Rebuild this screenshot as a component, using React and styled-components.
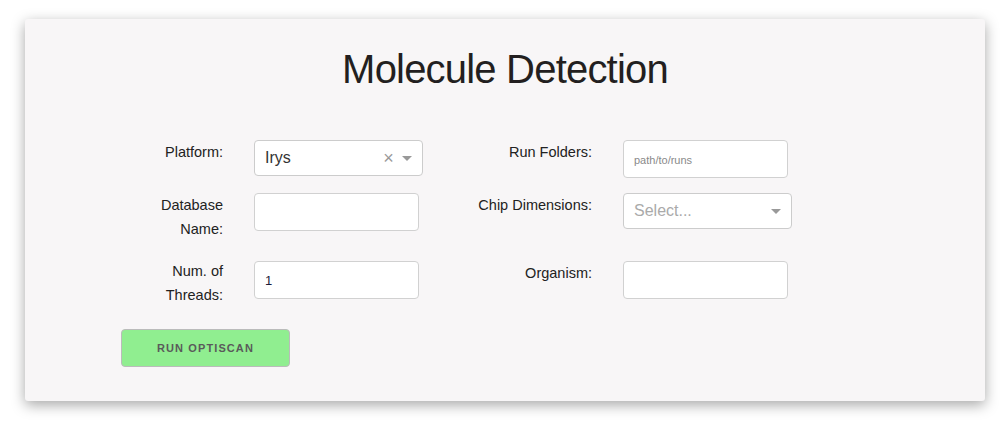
import React from "react";
import styled, { createGlobalStyle } from "styled-components";

const Global = createGlobalStyle`
  html, body { margin: 0; padding: 0; background: #ffffff; }
  body { font-family: "Liberation Sans", Arial, Helvetica, sans-serif; color: #222; }
  * { box-sizing: border-box; }
`;

const Page = styled.div`
  padding: 19px 20px 23px 25px;
  width: 1005px;
`;

const Card = styled.div`
  width: 960px;
  height: 382px;
  background: #f8f6f7;
  border-radius: 3px;
  box-shadow: 0 4px 14px rgba(0, 0, 0, 0.35);
  padding: 26px 0 0 96px;
`;

const Title = styled.h1`
  margin: 0 0 47px -96px;
  width: 960px;
  text-align: center;
  font-size: 40px;
  line-height: 48px;
  font-weight: 400;
  letter-spacing: -0.8px;
  color: #231f20;
`;

const Row = styled.div`
  display: grid;
  grid-template-columns: 102px 169px 138px 169px;
  column-gap: 31px;
  align-items: start;
  margin-bottom: ${(p) => p.$gap}px;
`;

const Label = styled.label`
  display: block;
  text-align: right;
  font-size: 14.5px;
  line-height: 24px;
  color: #222;
  margin-top: ${(p) => p.$offset || 0}px;
`;

const TextInput = styled.input`
  width: 165px;
  height: 38px;
  border: 1px solid #d1d1d1;
  border-radius: 4px;
  background: #fff;
  padding: 6px 10px;
  font-family: "Liberation Sans", Arial, sans-serif;
  font-size: 13px;
  color: #1c1c3a;
  outline: none;
  &::placeholder {
    color: #8a8a8a;
    font-size: 11px;
  }
`;

const SelectBox = styled.div`
  width: 169px;
  height: 36px;
  border: 1px solid #ccc;
  border-radius: 4px;
  background: #fff;
  display: flex;
  align-items: center;
  padding-left: 10px;
  font-size: 16px;
`;

const SelectValue = styled.span`
  flex: 1;
  color: ${(p) => (p.$placeholder ? "#aaa" : "#333")};
`;

const Clear = styled.span`
  width: 17px;
  font-size: 18px;
  line-height: 1;
  color: #999;
  text-align: center;
`;

const ArrowZone = styled.span`
  width: 25px;
  padding-right: 5px;
  display: flex;
  justify-content: center;
`;

const Arrow = styled.span`
  width: 0;
  height: 0;
  border-style: solid;
  border-width: 5px 5px 2.5px;
  border-color: #999 transparent transparent;
  margin-top: 3px;
`;

const Button = styled.button`
  width: 169px;
  height: 38px;
  background: #90ee90;
  border: 1px solid #bbb;
  border-radius: 4px;
  font-family: "Liberation Sans", Arial, sans-serif;
  font-size: 11px;
  font-weight: 700;
  letter-spacing: 1.1px;
  color: #5a5a5a;
  text-transform: uppercase;
  padding: 0;
  margin-left: 0;
`;

function Select({ value, placeholder, clearable }) {
  return (
    <SelectBox>
      <SelectValue $placeholder={!value}>{value || placeholder}</SelectValue>
      {clearable && <Clear>×</Clear>}
      <ArrowZone>
        <Arrow />
      </ArrowZone>
    </SelectBox>
  );
}

export default function App() {
  return (
    <>
      <Global />
      <Page>
        <Card>
          <Title>Molecule Detection</Title>
          <Row $gap={15}>
            <Label>Platform:</Label>
            <Select value="Irys" clearable />
            <Label>Run Folders:</Label>
            <TextInput placeholder="path/to/runs" />
          </Row>
          <Row $gap={20}>
            <Label>Database Name:</Label>
            <TextInput />
            <Label>Chip Dimensions:</Label>
            <Select placeholder="Select..." />
          </Row>
          <Row $gap={22}>
            <Label $offset={-2}>Num. of Threads:</Label>
            <TextInput defaultValue="1" />
            <Label>Organism:</Label>
            <TextInput />
          </Row>
          <Button>Run Optiscan</Button>
        </Card>
      </Page>
    </>
  );
}
